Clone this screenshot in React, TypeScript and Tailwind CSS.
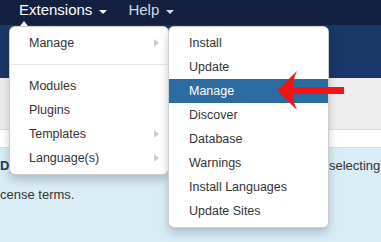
const mainItems = [
  { label: 'Manage', sub: true },
  { divider: true },
  { label: 'Modules' },
  { label: 'Plugins' },
  { label: 'Templates', sub: true },
  { label: 'Language(s)', sub: true },
]

const subItems = [
  'Install',
  'Update',
  'Manage',
  'Discover',
  'Database',
  'Warnings',
  'Install Languages',
  'Update Sites',
]

function Caret({ color }: { color: string }) {
  return <span className={`ml-[7px] mt-[10px] block h-0 w-0 border-x-4 border-t-4 border-x-transparent ${color}`} />
}

export default function App() {
  return (
    <div className="relative h-[242px] w-[381px] overflow-hidden bg-white font-['Liberation_Sans',Arial,sans-serif] text-[#333]">
      {/* top navbar */}
      <nav className="flex h-[25px] items-start bg-[#132040] pl-[19px] text-[15px] leading-[20px]">
        <span className="flex items-start text-white">
          Extensions
          <Caret color="border-t-white" />
        </span>
        <span className="ml-[21px] flex items-start text-[#d5dbe5]">
          Help
          <Caret color="border-t-[#d5dbe5]" />
        </span>
      </nav>

      {/* page header + toolbar */}
      <div className="h-[53px] bg-[#1a3867]" />
      <div className="h-[52px] border-b border-[#dddddd] bg-[#eeeeee]" />
      <div className="h-[17px] bg-white" />

      {/* info message */}
      <div className="h-[200px] border-t border-[#bce8f1] bg-[#d9edf7] pt-[9px] text-[13px] leading-[18px]">
        <p className="flex whitespace-nowrap">
          <span className="w-[329px] font-bold text-[#24385a]">D)</span>
          <span>selecting</span>
        </p>
        <p className="mt-[11px] whitespace-nowrap">cense terms.</p>
      </div>

      {/* Extensions dropdown */}
      <div className="absolute left-[20px] top-[21px] h-0 w-0 border-x-4 border-b-[5px] border-x-transparent border-b-white" />
      <ul className="absolute left-[9px] top-[26px] w-[160px] rounded-[6px] border border-black/20 bg-white py-1 text-[12.5px] shadow-[0_5px_10px_rgba(0,0,0,0.2)]">
        {mainItems.map((item, i) =>
          item.divider ? (
            <li key={i} className="mx-px my-[9px] h-px bg-[#e5e5e5]" />
          ) : (
            <li key={i} className="flex h-[24px] items-center justify-between pl-[19px] pr-[9px]">
              <span>{item.label}</span>
              {item.sub && (
                <span className="h-0 w-0 border-y-4 border-l-[5px] border-y-transparent border-l-[#cccccc]" />
              )}
            </li>
          )
        )}
      </ul>

      {/* Components submenu */}
      <ul className="absolute left-[168px] top-[26px] w-[161px] rounded-[6px] border border-black/20 bg-white py-1 text-[12.5px] shadow-[0_5px_10px_rgba(0,0,0,0.2)]">
        {subItems.map((label, i) => (
          <li
            key={label + i}
            className={
              i === 2
                ? 'flex h-[24px] items-center bg-[#2d6ca2] px-[20px] text-white'
                : 'flex h-[24px] items-center px-[20px]'
            }
          >
            {label}
          </li>
        ))}
      </ul>

      {/* red pointer arrow */}
      <svg className="absolute left-[275px] top-[68px]" width="72" height="45" viewBox="0 0 72 45">
        <path d="M2 22.5 L22 3 Q17 13 19 19 L69 19 L69 26 L19 26 Q17 32 22 42 Z" fill="#f01414" />
      </svg>
    </div>
  )
}
